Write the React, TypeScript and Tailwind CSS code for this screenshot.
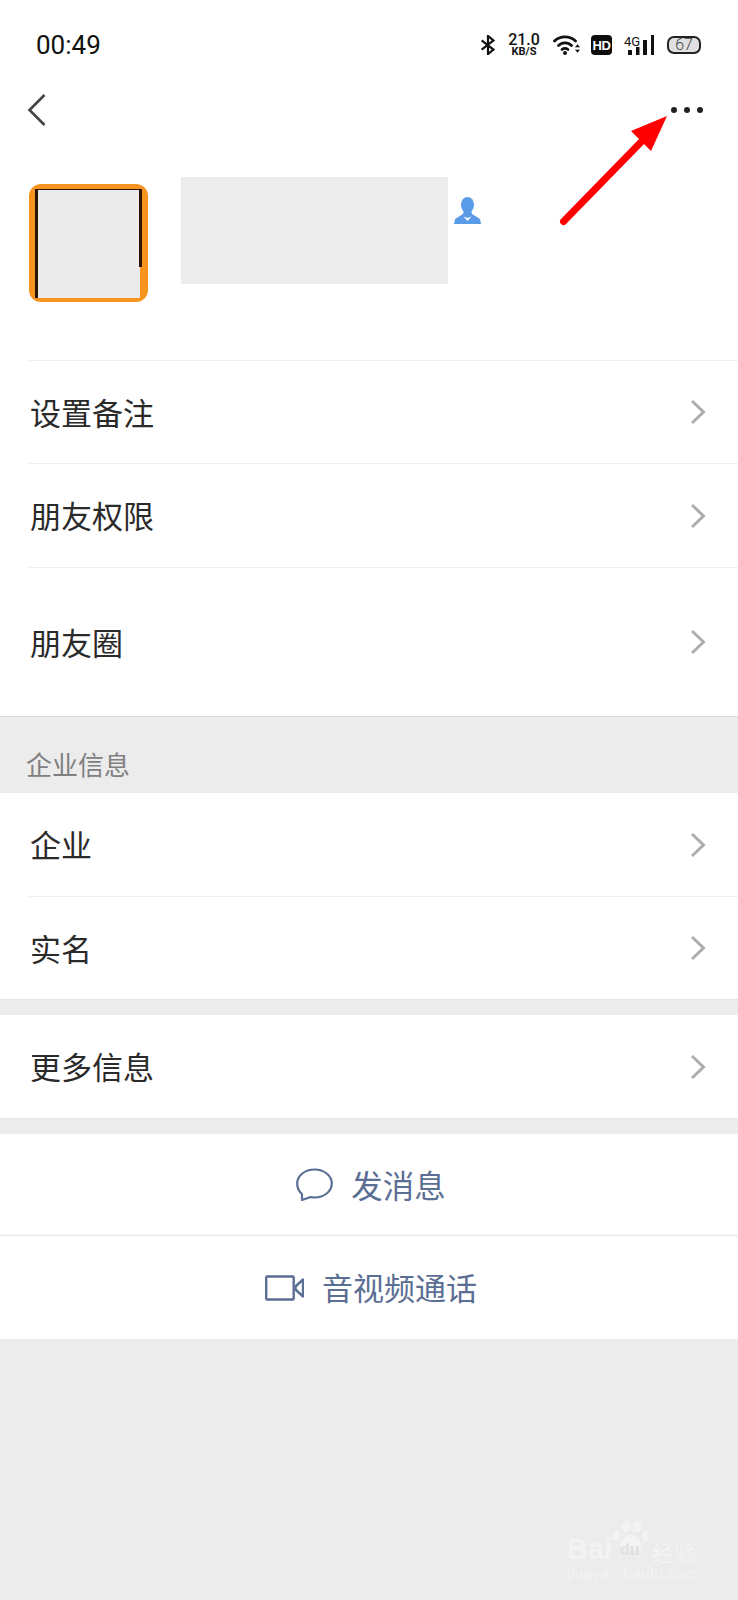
import React from "react";

const cjk = { fontFamily: '"Noto Sans CJK SC", sans-serif' };

function Chevron() {
  return (
    <svg width="16" height="26" viewBox="0 0 16 26" fill="none" stroke="#adadad" strokeWidth="3">
      <path d="M2 2 L13.5 13 L2 24" />
    </svg>
  );
}

function Row({ label, h, border = true }: { label: string; h: string; border?: boolean }) {
  return (
    <div className={`${h} pl-[29px] bg-white`}>
      <div className={`h-full flex items-center justify-between pr-[32px] ${border ? "border-t border-[#efefef]" : ""}`}>
        <span className="ml-[1px] text-[31px] text-[#2a2a2a]" style={cjk}>{label}</span>
        <Chevron />
      </div>
    </div>
  );
}

export default function App() {
  return (
    <div className="w-[738px] h-[1600px] bg-[#ececec] relative overflow-hidden" style={cjk}>
      <div className="bg-white">
        <div className="h-[79px] flex items-start justify-between pl-[36px] pr-[37px] pt-[27px]">
          <span className="text-[26px] leading-[36px] text-[#111]" style={{ fontFamily: "Roboto, sans-serif" }}>00:49</span>
          <div className="flex items-center h-[36px]">
            <svg width="16" height="20" viewBox="0 0 16 22" fill="none" stroke="#111" strokeWidth="2.4">
              <path d="M1 6 L14 16 L8 21 L8 1 L14 6 L1 16" />
            </svg>
            <div className="ml-[11px] flex flex-col items-center w-[34px] gap-[1px]" style={{ fontFamily: "Roboto, sans-serif" }}>
              <span className="text-[16px] leading-[13px] font-medium text-[#111]">21.0</span>
              <span className="text-[11px] leading-[10px] font-bold text-[#111]">KB/S</span>
            </div>
            <svg width="27" height="20" viewBox="0 0 27 20" fill="none" stroke="#111" strokeWidth="2.8" strokeLinecap="round" className="ml-[12px]">
              <path d="M1.5 6 C7 0.5 17 0.5 22.5 6" />
              <path d="M5.5 10.5 C9 7 15 7 18.5 10.5" />
              <path d="M9 14.5 C11 13 13 13 15 14.5" />
              <circle cx="12" cy="18" r="2" fill="#111" stroke="none" />
              <path d="M22.5 12 l2 -2.5 l2 2.5 z M22.5 15 l2 2.5 l2 -2.5 z" fill="#111" strokeWidth="0.4" />
            </svg>
            <div className="ml-[11px] w-[21px] h-[20px] bg-[#0d0d0d] rounded-[4px] flex items-center justify-center text-white text-[13px] tracking-[-0.5px] font-bold leading-none" style={{ fontFamily: '"Liberation Sans", sans-serif' }}>HD</div>
            <svg width="30" height="20" viewBox="0 0 30 20" className="ml-[12px]">
              <text x="0" y="10.5" fontSize="13" fill="#111" fontFamily="Roboto, sans-serif">4G</text>
              <rect x="4" y="15" width="4" height="5" fill="#111" />
              <rect x="12" y="12" width="3.5" height="8" fill="#111" />
              <rect x="19" y="5" width="4" height="15" fill="#111" />
              <rect x="27" y="0" width="3" height="20" fill="#111" />
            </svg>
            <div className="ml-[13px] w-[34px] h-[18px] rounded-[7px] border-2 border-[#222] bg-[#e0e0e0] flex items-center justify-center text-[16px] leading-none text-[#444]" style={{ fontFamily: "Roboto, sans-serif", fontWeight: 300 }}>
              67
            </div>
          </div>
        </div>

        <div className="h-[62px] flex items-center justify-between pl-[27px] pr-[35px]">
          <svg width="20" height="34" viewBox="0 0 20 34" fill="none" stroke="#444" strokeWidth="2.6">
            <path d="M17.5 2 L2.5 17 L17.5 32" />
          </svg>
          <div className="flex gap-[7px]">
            <div className="w-[6px] h-[6px] rounded-full bg-[#222]" />
            <div className="w-[6px] h-[6px] rounded-full bg-[#222]" />
            <div className="w-[6px] h-[6px] rounded-full bg-[#222]" />
          </div>
        </div>

        <div className="h-[219px] pl-[29px] flex items-start pt-[36px]">
          <div className="relative mt-[7px] w-[119px] h-[118px] rounded-[12px] bg-[#f7941d] pl-[6px] pt-[5px] pr-[8px] pb-[4px] shrink-0">
            <div className="w-full h-full bg-[#ebebeb] border-l-[3px] border-t border-[#2a1405]" />
            <div className="absolute left-[110px] top-[5px] w-[3px] h-[78px] bg-[#2a1405]" />
          </div>
          <div className="ml-[33px] w-[267px] h-[107px] bg-[#ececec]" />
          <svg width="27" height="27" viewBox="0 0 27 27" className="mt-[20px] ml-[6px]">
            <ellipse cx="13.5" cy="8" rx="6.5" ry="8" fill="#5a9be8" />
            <path d="M10 13 L17 13 L18 17 L26 22 L27 27 L0 27 L1 22 L9 17 Z" fill="#5a9be8" />
            <path d="M9.5 19.5 L13.5 24 L17.5 19.5 L13.5 21 Z" fill="#fff" />
          </svg>
        </div>

        <Row label="设置备注" h="h-[103px]" />
        <Row label="朋友权限" h="h-[104px]" />
        <Row label="朋友圈" h="h-[149px]" />
      </div>

      <div className="h-[77px] border-t border-[#dcdcdc] flex items-end pl-[26px] pb-[11px]">
        <span className="text-[26px] leading-[36px] text-[#808080]">企业信息</span>
      </div>

      <Row label="企业" h="h-[103px]" border={false} />
      <Row label="实名" h="h-[103px]" />
      <div className="h-[16px] border-t border-[#e6e6e6]" />
      <Row label="更多信息" h="h-[103px]" border={false} />
      <div className="h-[16px] border-t border-[#e6e6e6]" />

      <div className="h-[102px] bg-white flex items-center justify-center gap-[18px] border-b border-[#e6e6e6] pl-[4px]">
        <svg width="37" height="33" viewBox="0 0 37 33" fill="none" stroke="#5b6e93" strokeWidth="2.2" strokeLinejoin="round">
          <path d="M18.5 1.5 C28 1.5 35.8 7.5 35.8 15.5 C35.8 23.5 28 29.5 18.5 29.5 C17 29.5 15.5 29.4 14.5 29 L6 32 L6 26 C3 23.5 1.2 19.5 1.2 15.5 C1.2 7.5 9 1.5 18.5 1.5 Z" />
        </svg>
        <span className="text-[31.5px] text-[#5b6e93]">发消息</span>
      </div>
      <div className="h-[103px] bg-white flex items-center justify-center gap-[18px] pl-[4px]">
        <svg width="39" height="26" viewBox="0 0 39 26" fill="none" stroke="#5b6e93" strokeWidth="2.4" strokeLinejoin="round">
          <rect x="1.2" y="1.5" width="27.5" height="23" rx="1" />
          <path d="M38 4.5 L31 11 Q30 13 31 15 L38 21.5 Z" />
        </svg>
        <span className="text-[31px] text-[#5b6e93]">音视频通话</span>
      </div>

      {/* red arrow annotation */}
      <svg width="130" height="120" viewBox="0 0 130 120" className="absolute left-[555px] top-[110px]">
        <path d="M8.5 111.5 L88 30" stroke="#ff0000" strokeWidth="7" strokeLinecap="round" fill="none" />
        <path d="M112 6 L76 21 L96 41 Z" fill="#ff0000" />
      </svg>

      {/* Baidu watermark */}
      <div className="absolute left-[565px] top-[1515px] w-[140px] h-[70px] text-[#f3f3f3]">
        <svg width="38" height="32" viewBox="0 0 36 32" className="absolute left-[47px] top-[5px]" fill="#f3f3f3">
          <ellipse cx="4" cy="16" rx="3.5" ry="5" />
          <ellipse cx="13" cy="6.5" rx="4.5" ry="6" />
          <ellipse cx="24" cy="6.5" rx="4.5" ry="6" />
          <ellipse cx="32.5" cy="16" rx="3.5" ry="6" />
          <path d="M18 14 C25 16 33 28 25 31 L11 31 C3 28 11 15 18 14 Z" />
        </svg>
        <span className="absolute left-[2px] top-[16px] text-[29px] leading-[36px] font-bold" style={{ fontFamily: '"Liberation Sans", sans-serif' }}>Bai</span>
        <span className="absolute left-[55px] top-[27px] text-[16px] leading-[16px] font-bold text-[#dfdfdf]" style={{ fontFamily: '"Liberation Sans", sans-serif' }}>du</span>
        <span className="absolute left-[87px] top-[23px] text-[22px] leading-[26px]">经验</span>
        <span className="absolute left-[2px] top-[50px] text-[15px] leading-[18px] tracking-[0.6px]" style={{ fontFamily: '"Liberation Sans", sans-serif' }}>jingyan.baidu.com</span>
      </div>
    </div>
  );
}
